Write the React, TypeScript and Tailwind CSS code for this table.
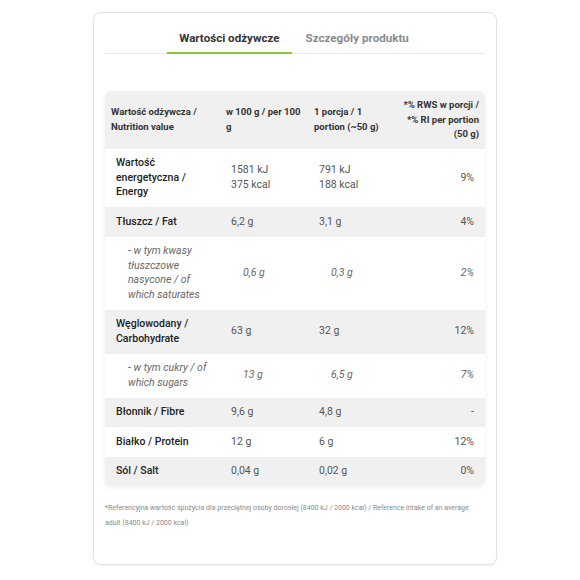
const ROWS = [
  { name: "Wartość energetyczna / Energy", per100: ["1581 kJ", "375 kcal"], portion: ["791 kJ", "188 kcal"], ri: "9%", sub: false },
  { name: "Tłuszcz / Fat", per100: ["6,2 g"], portion: ["3,1 g"], ri: "4%", sub: false },
  { name: "- w tym kwasy tłuszczowe nasycone / of which saturates", per100: ["0,6 g"], portion: ["0,3 g"], ri: "2%", sub: true },
  { name: "Węglowodany / Carbohydrate", per100: ["63 g"], portion: ["32 g"], ri: "12%", sub: false },
  { name: "- w tym cukry / of which sugars", per100: ["13 g"], portion: ["6,5 g"], ri: "7%", sub: true },
  { name: "Błonnik / Fibre", per100: ["9,6 g"], portion: ["4,8 g"], ri: "-", sub: false },
  { name: "Białko / Protein", per100: ["12 g"], portion: ["6 g"], ri: "12%", sub: false },
  { name: "Sól / Salt", per100: ["0,04 g"], portion: ["0,02 g"], ri: "0%", sub: false },
];

export default function App() {
  return (
    <div className="min-h-[580px] bg-white pt-[12px] font-['Roboto',sans-serif]">
      <div className="ml-[93px] w-[404px] rounded-[8px] border border-[#e2e2e2] px-[11px] pt-[10px] pb-[33px] shadow-[0_1px_2px_rgba(0,0,0,0.06)]">
        {/* ── Tabs ─────────────────────────────── */}
        <div className="flex justify-center border-b border-[#e8e8e8]">
          <button className="-mb-px border-b-2 border-[#8cc63f] px-[12px] pt-[8px] pb-[7px] text-[11.6px] font-bold leading-[14px] text-[#333]">
            Wartości odżywcze
          </button>
          <button className="-mb-px border-b-2 border-transparent px-[14px] pt-[8px] pb-[7px] text-[11.6px] font-bold leading-[14px] text-[#8a8a8a]">
            Szczegóły produktu
          </button>
        </div>

        {/* ── Table ────────────────────────────── */}
        <div className="mt-[37px] overflow-hidden rounded-[7px] shadow-[0_2px_4px_rgba(0,0,0,0.07)]">
          <table className="w-full table-fixed border-collapse text-[10.5px] leading-[14.5px]">
            <colgroup>
              <col className="w-[115px]" />
              <col className="w-[88px]" />
              <col className="w-[86px]" />
              <col />
            </colgroup>
            <thead>
              <tr className="bg-[#f0f0f0] text-[9.5px] font-bold text-[#333]">
                <th className="px-[6px] py-[7px] text-left align-middle">Wartość odżywcza / Nutrition value</th>
                <th className="px-[6px] py-[7px] text-left align-middle">w 100 g / per 100 g</th>
                <th className="px-[6px] py-[7px] text-left align-middle">1 porcja / 1 portion (~50 g)</th>
                <th className="px-[6px] py-[7px] text-right align-middle">*% RWS w porcji / *% RI per portion (50 g)</th>
              </tr>
            </thead>
            <tbody>
              {ROWS.map((r, i) => (
                <tr key={i} className={i % 2 === 0 ? "bg-white" : "bg-[#f0f0f0]"}>
                  <td
                    className={
                      r.sub
                        ? "py-[7.5px] pl-[23px] pr-[8px] align-middle italic text-[#666]"
                        : "py-[7.5px] pl-[11px] pr-[8px] align-middle font-medium text-[#222]"
                    }
                  >
                    {r.name}
                  </td>
                  <td className={r.sub ? "py-[7.5px] pl-[23px] align-middle italic text-[#666]" : "py-[7.5px] pl-[11px] align-middle text-[#555]"}>
                    {r.per100.map((v) => (
                      <div key={v}>{v}</div>
                    ))}
                  </td>
                  <td className={r.sub ? "py-[7.5px] pl-[23px] align-middle italic text-[#666]" : "py-[7.5px] pl-[11px] align-middle text-[#555]"}>
                    {r.portion.map((v) => (
                      <div key={v}>{v}</div>
                    ))}
                  </td>
                  <td className={r.sub ? "py-[7.5px] pr-[11px] text-right align-middle italic text-[#666]" : "py-[7.5px] pr-[11px] text-right align-middle text-[#555]"}>
                    {r.ri}
                  </td>
                </tr>
              ))}
            </tbody>
          </table>
        </div>

        {/* ── Footnote ─────────────────────────── */}
        <p className="mt-[15px] text-[7px] leading-[15px] text-[#8a8a8a]">
          *Referencyjna wartość spożycia dla przeciętnej osoby dorosłej (8400 kJ / 2000 kcal) / Reference intake of an average adult (8400 kJ / 2000 kcal)
        </p>
      </div>
    </div>
  );
}
